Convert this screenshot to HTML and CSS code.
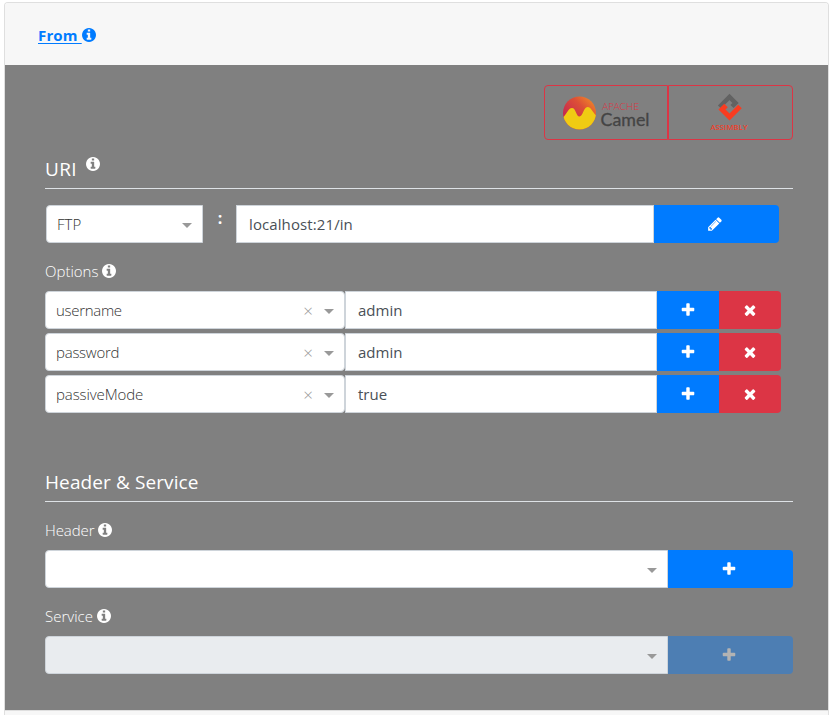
FILE: index.html
```
<!DOCTYPE html>
<html lang="en">
<head>
<meta charset="utf-8">
<title>From</title>
<link rel="stylesheet" href="styles.css">
</head>
<body>
<svg class="defs" width="0" height="0">
  <symbol id="info" viewBox="0 0 1536 1536"><path transform="translate(0 -128)" d="M1024 1376v-160q0-14-9-23t-23-9h-96v-512q0-14-9-23t-23-9h-320q-14 0-23 9t-9 23v160q0 14 9 23t23 9h96v320h-96q-14 0-23 9t-9 23v160q0 14 9 23t23 9h448q14 0 23-9t9-23zm-128-896v-160q0-14-9-23t-23-9h-192q-14 0-23 9t-9 23v160q0 14 9 23t23 9h192q14 0 23-9t9-23zm640 416q0 209-103 385.500t-279.500 279.500-385.500 103-385.500-103-279.500-279.500-103-385.500 103-385.500 279.500-279.500 385.500-103 385.500 103 279.500 279.500 103 385.500z"/></symbol>
  <symbol id="plus" viewBox="0 0 1792 1792"><path d="M1600 736v192q0 40-28 68t-68 28h-416v416q0 40-28 68t-68 28h-192q-40 0-68-28t-28-68v-416h-416q-40 0-68-28t-28-68v-192q0-40 28-68t68-28h416v-416q0-40 28-68t68-28h192q40 0 68 28t28 68v416h416q40 0 68 28t28 68z"/></symbol>
  <symbol id="times" viewBox="0 0 1792 1792"><path d="M1490 1322q0 40-28 68l-136 136q-28 28-68 28t-68-28l-294-294-294 294q-28 28-68 28t-68-28l-136-136q-28-28-28-68t28-68l294-294-294-294q-28-28-28-68t28-68l136-136q28-28 68-28t68 28l294 294 294-294q28-28 68-28t68 28l136 136q28 28 28 68t-28 68l-294 294 294 294q28 28 28 68z"/></symbol>
  <symbol id="pencil" viewBox="0 0 1792 1792"><path d="M491 1536l91-91-235-235-91 91v107h128v128h107zm523-928q0-22-22-22-10 0-17 7l-542 542q-7 7-7 17 0 22 22 22 10 0 17-7l542-542q7-7 7-17zm-54-192l416 416-832 832h-416v-416zm683 96q0 53-37 90l-166 166-416-416 166-165q36-38 90-38 53 0 91 38l235 234q37 39 37 91z"/></symbol>
</svg>
<div class="card">
  <div class="card-header"><a class="from"><span class="from-text">From&nbsp;</span><svg class="info"><use href="#info"/></svg></a></div>
  <div class="card-body">
    <div class="logos">
      <div class="logo logo-camel">
        <svg width="90" height="38" viewBox="0 0 90 38">
          <defs>
            <linearGradient id="sun" x1="1" y1="0" x2="0.2" y2="0.8"><stop offset="0" stop-color="#f69923"/><stop offset="0.45" stop-color="#dd5036"/><stop offset="1" stop-color="#c32452"/></linearGradient>
            <clipPath id="disc"><circle cx="16.5" cy="19" r="16.5"/></clipPath>
          </defs>
          <circle cx="16.5" cy="19" r="16.5" fill="url(#sun)"/>
          <path clip-path="url(#disc)" fill="#f0cb13" d="M-1 24C3 22 5 14 9 14c4 0 4 8.500 7.500 8.500S20.500 13 24.500 13c4 0 5 6 9.500 9v16H-1z"/>
          <text class="apache" x="39" y="15.500" textLength="37" lengthAdjust="spacingAndGlyphs">APACHE</text>
          <text class="camel" x="37.500" y="31.500" textLength="49" lengthAdjust="spacingAndGlyphs">Camel</text>
        </svg>
      </div>
      <div class="logo logo-assembly">
        <svg width="40" height="40" viewBox="0 0 40 40">
          <path d="M10.500 16L20.500 6L26.500 12L23 15.500" fill="none" stroke="#626262" stroke-width="4.500"/>
          <path d="M17 14.500L13 18.500L20.500 26L31 15.500" fill="none" stroke="#f93c20" stroke-width="5"/>
          <text class="assembly" x="1.500" y="39" textLength="37" lengthAdjust="spacingAndGlyphs">ASSIMBLY</text>
        </svg>
      </div>
    </div>
    <h5 class="title title-uri"><span class="t-uri">URI</span><svg class="info raised"><use href="#info"/></svg></h5>
    <div class="uri-row">
      <div class="select select-type"><span class="t-ftp">FTP</span><i class="caret"></i></div>
      <div class="colon">:</div>
      <div class="input input-uri"><span class="t-host">localhost:21/in</span></div>
      <div class="btn btn-edit"><svg><use href="#pencil"/></svg></div>
    </div>
    <div class="label label-options"><span>Options</span><svg class="info"><use href="#info"/></svg></div>
    <div class="options">
      <div class="option-row">
        <div class="select select-option"><span class="t-user">username</span><b class="clear">×</b><i class="caret"></i></div>
        <div class="input input-option"><span>admin</span></div>
        <div class="btn btn-add"><svg><use href="#plus"/></svg></div>
        <div class="btn btn-remove"><svg><use href="#times"/></svg></div>
      </div>
      <div class="option-row">
        <div class="select select-option"><span class="t-pass">password</span><b class="clear">×</b><i class="caret"></i></div>
        <div class="input input-option"><span>admin</span></div>
        <div class="btn btn-add"><svg><use href="#plus"/></svg></div>
        <div class="btn btn-remove"><svg><use href="#times"/></svg></div>
      </div>
      <div class="option-row">
        <div class="select select-option"><span class="t-mode">passiveMode</span><b class="clear">×</b><i class="caret"></i></div>
        <div class="input input-option"><span>true</span></div>
        <div class="btn btn-add"><svg><use href="#plus"/></svg></div>
        <div class="btn btn-remove"><svg><use href="#times"/></svg></div>
      </div>
    </div>
    <h5 class="title title-service"><span class="t-hs">Header &amp; Service</span></h5>
    <div class="label label-header"><span class="t-header">Header</span><svg class="info"><use href="#info"/></svg></div>
    <div class="wide-row">
      <div class="select select-wide"><i class="caret"></i></div>
      <div class="btn btn-wide"><svg><use href="#plus"/></svg></div>
    </div>
    <div class="label label-service"><span>Service</span><svg class="info"><use href="#info"/></svg></div>
    <div class="wide-row">
      <div class="select select-wide disabled"><i class="caret"></i></div>
      <div class="btn btn-wide disabled"><svg><use href="#plus"/></svg></div>
    </div>
  </div>
  <div class="card-footer"></div>
</div>
</body>
</html>
```
FILE: styles.css
```
* { box-sizing: border-box; }
body {
  margin: 0;
  padding: 2px 6px 0 4px;
  height: 715px;
  background: #fff;
  font-family: "Open Sans", "Noto Sans", sans-serif;
  font-size: 15px;
  color: #495057;
}
.defs { position: absolute; }
.card {
  height: 713px;
  border: 1px solid #dfdfdf;
  border-bottom: 0;
  border-radius: 4px 4px 0 0;
  overflow: hidden;
}
.card-header {
  height: 62px;
  padding: 2px 0 0 33px;
  display: flex;
  align-items: center;
  background: #f7f7f7;
}
.from { display: flex; align-items: center; color: #007bff; font-weight: 700; }
.from-text { text-decoration: underline; text-underline-offset: 2px; letter-spacing: 0.15px; }
.info { width: 14px; height: 14px; fill: currentColor; flex: none; }
.card-body {
  height: 645px;
  padding: 20px 35px 0 40px;
  background: #808080;
}
.logos { display: flex; width: 249px; height: 55px; margin-left: auto; }
.logo { display: flex; border: 1px solid #dc3545; }
.logo-camel { width: 124px; padding: 8px 0 0 18px; border-radius: 4px 0 0 4px; }
.logo-assembly { width: 125px; padding: 5px 0 0 40px; border-radius: 0 4px 4px 0; }
.apache { font: 300 10px Lato, sans-serif; fill: #dc3545; }
.camel { font: 400 18px Lato, sans-serif; fill: #444; stroke: #444; stroke-width: 0.3px; }
.assembly { font: 600 7px "Open Sans", sans-serif; fill: #f0402c; }
.title {
  display: flex;
  margin: 0;
  border-bottom: 1px solid #dee2e6;
  color: #fff;
  font-size: 19px;
  font-weight: 400;
  line-height: 26px;
}
.title-uri { height: 49px; padding-top: 16px; }
.t-uri { letter-spacing: 0.3px; }
.t-hs { letter-spacing: 0.1px; }
.raised { margin: 1px 0 0 9px; }
.uri-row { display: flex; height: 38px; margin: 16px 0 0 1px; }
.select, .input {
  display: flex;
  align-items: center;
  height: 38px;
  background: #fff;
  border: 1px solid #ced4da;
}
.select { padding: 0 10px; border-radius: 4px; color: #333; font-weight: 300; }
.select-type { width: 157px; border-radius: 4px 0 0 4px; }
.input { padding-left: 12px; }
.input-uri { width: 418px; }
.t-host { letter-spacing: 0.1px; }
.t-user { letter-spacing: -0.3px; }
.t-pass { letter-spacing: -0.25px; }
.t-mode { letter-spacing: -0.1px; }
.t-header { letter-spacing: -0.1px; }
.colon { width: 33px; padding: 2px 0 0 1px; text-align: center; color: #fff; font-weight: 700; font-size: 16px; line-height: 22px; }
.caret { margin-left: auto; margin-top: 3px; border: 5px solid transparent; border-top-color: #999; border-bottom: 0; }
.clear { margin-left: auto; color: #999; font-size: 17px; font-weight: 300; }
.clear + .caret { margin-left: 11px; }
.btn { display: flex; align-items: center; justify-content: center; height: 38px; color: #fff; background: #007bff; }
.btn svg { width: 16px; height: 16px; fill: currentColor; }
.btn-edit { width: 125px; padding-right: 3px; border-radius: 0 4px 4px 0; }
.label { display: flex; align-items: center; height: 20px; color: #fff; font-weight: 300; }
.label .info { margin-left: 4px; }
.label-options { margin: 18px 0 10px; }
.options { display: grid; gap: 4px; }
.option-row { display: flex; }
.select-option { width: 300px; }
.input-option { width: 312px; }
.btn-add { width: 62px; }
.btn-remove { width: 62px; background: #dc3545; border-radius: 0 4px 4px 0; }
.title-service { height: 89px; padding-top: 56px; }
.label-header, .label-service { margin: 18px 0 10px; }
.wide-row { display: flex; }
.select-wide { width: 623px; border-radius: 4px 0 0 4px; }
.btn-wide { width: 125px; padding: 0 3px 0 0; border-radius: 0 4px 4px 0; }
.select-wide.disabled { background: #e9ecef; }
.btn-wide.disabled { background: #4d7eb3; color: #b3b3b3; }
.card-footer { height: 5px; border-top: 1px solid #dfdfdf; background: #f7f7f7; }
```
